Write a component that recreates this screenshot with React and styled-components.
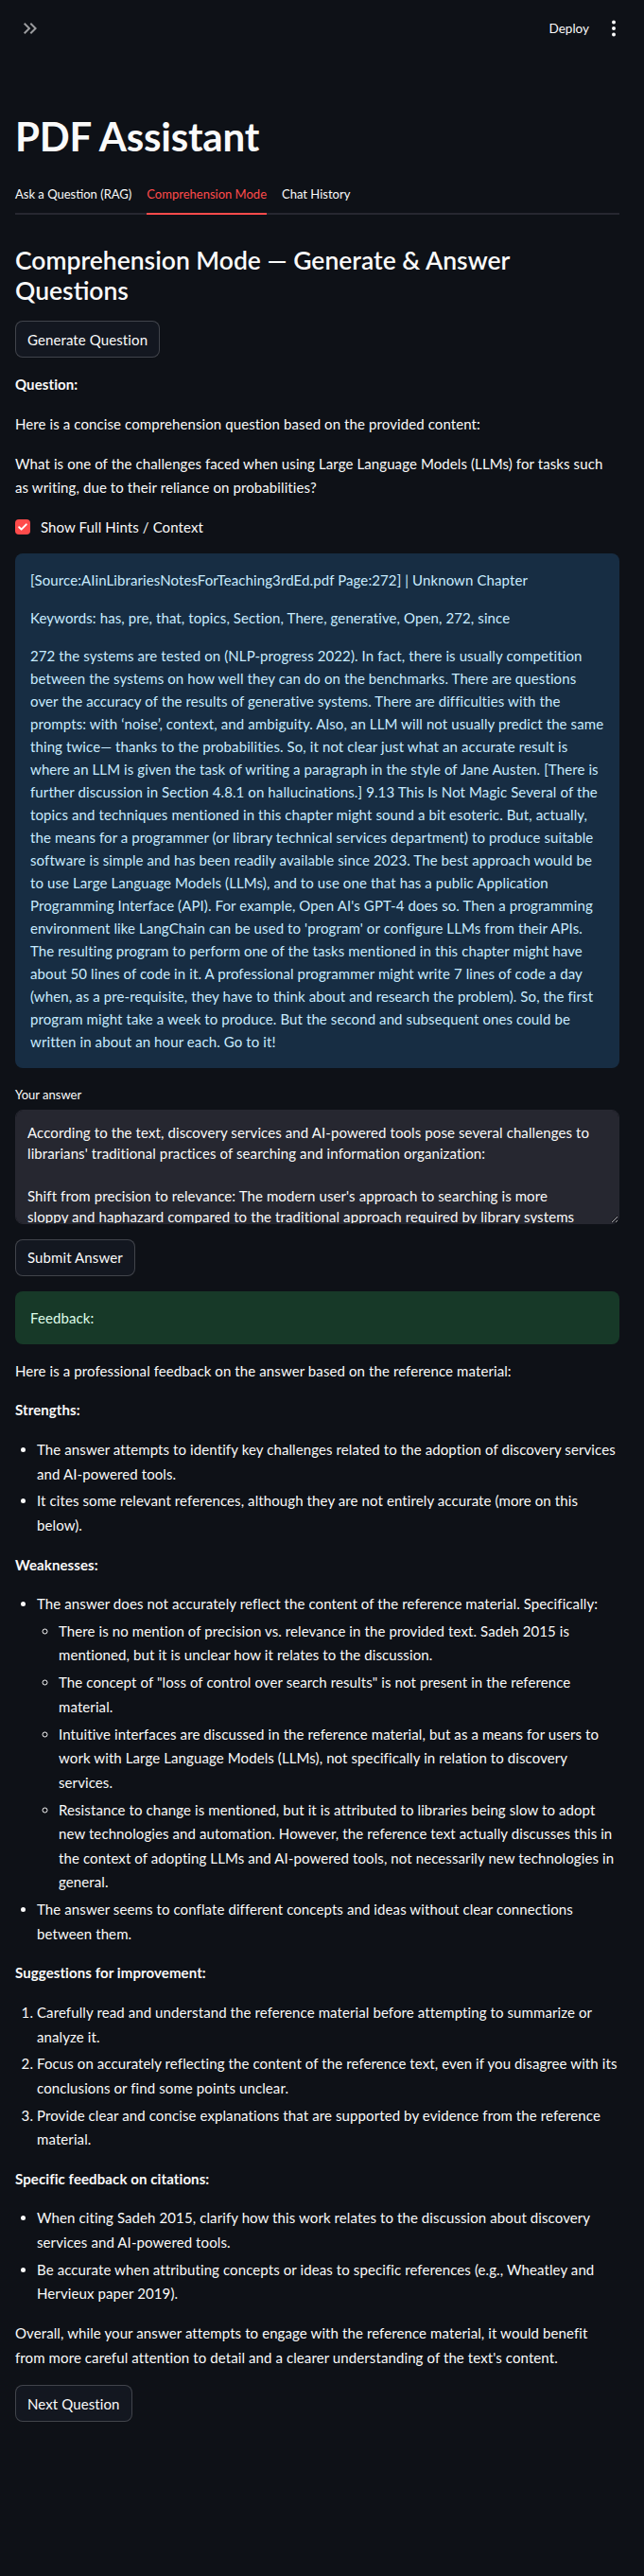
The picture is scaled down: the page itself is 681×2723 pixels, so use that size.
import styled, { createGlobalStyle } from 'styled-components'

const GlobalStyle = createGlobalStyle`
  html, body {
    margin: 0;
    padding: 0;
    background: #0e1117;
  }
  body {
    font-family: "Source Sans Pro", Lato, "Noto Sans", sans-serif;
    color: #fafafa;
    font-size: 15px;
    letter-spacing: 0.1px;
  }
  * {
    box-sizing: border-box;
  }
`

function DoubleArrowIcon() {
  return (
    <svg width="24" height="24" viewBox="0 0 24 24" fill="rgba(250,250,250,0.6)">
      <path d="M6.41 6L5 7.41 9.58 12 5 16.59 6.41 18l6-6z" />
      <path d="M13 6l-1.41 1.41L16.17 12l-4.58 4.59L13 18l6-6z" />
    </svg>
  )
}

function KebabIcon() {
  return (
    <svg width="24" height="24" viewBox="0 0 24 24" fill="#fafafa">
      <circle cx="12" cy="5.5" r="2" />
      <circle cx="12" cy="12" r="2" />
      <circle cx="12" cy="18.5" r="2" />
    </svg>
  )
}

function CheckIcon() {
  return (
    <svg width="12" height="12" viewBox="0 0 12 12">
      <path d="M2.2 6.2l2.4 2.4 5.2-5.2" fill="none" stroke="#fff" strokeWidth="2" strokeLinecap="round" strokeLinejoin="round" />
    </svg>
  )
}

const answerText = `According to the text, discovery services and AI-powered tools pose several challenges to librarians' traditional practices of searching and information organization:

Shift from precision to relevance: The modern user's approach to searching is more sloppy and haphazard compared to the traditional approach required by library systems (Sadeh 2015). Discovery services prioritize relevance over precision.`

function App() {
  return (
    <>
      <GlobalStyle />
      <Header>
        <IconButton><DoubleArrowIcon /></IconButton>
        <HeaderRight>
          <DeployButton>Deploy</DeployButton>
          <IconButton><KebabIcon /></IconButton>
        </HeaderRight>
      </Header>

      <Main>
        <Title>PDF Assistant</Title>

        <TabList>
          <Tab>Ask a Question (RAG)</Tab>
          <Tab active>Comprehension Mode</Tab>
          <Tab>Chat History</Tab>
        </TabList>

        <SubTitle>Comprehension Mode — Generate &amp; Answer Questions</SubTitle>

        <div>
          <Button>Generate Question</Button>
        </div>

        <Markdown>
          <p><strong>Question:</strong></p>
          <p>Here is a concise comprehension question based on the provided content:</p>
          <p>What is one of the challenges faced when using Large Language Models (LLMs) for tasks such as writing, due to their reliance on probabilities?</p>
        </Markdown>

        <CheckRow>
          <CheckBox><CheckIcon /></CheckBox>
          <span>Show Full Hints / Context</span>
        </CheckRow>

        <Alert kind="info">
          <p>[Source:AIinLibrariesNotesForTeaching3rdEd.pdf Page:272] | Unknown Chapter</p>
          <p>Keywords: has, pre, that, topics, Section, There, generative, Open, 272, since</p>
          <p>272 the systems are tested on (NLP-progress 2022). In fact, there is usually competition between the systems on how well they can do on the benchmarks. There are questions over the accuracy of the results of generative systems. There are difficulties with the prompts: with ‘noise’, context, and ambiguity. Also, an LLM will not usually predict the same thing twice— thanks to the probabilities. So, it not clear just what an accurate result is where an LLM is given the task of writing a paragraph in the style of Jane Austen. [There is further discussion in Section 4.8.1 on hallucinations.] 9.13 This Is Not Magic Several of the topics and techniques mentioned in this chapter might sound a bit esoteric. But, actually, the means for a programmer (or library technical services department) to produce suitable software is simple and has been readily available since 2023. The best approach would be to use Large Language Models (LLMs), and to use one that has a public Application Programming Interface (API). For example, Open AI's GPT-4 does so. Then a programming environment like LangChain can be used to 'program' or configure LLMs from their APIs. The resulting program to perform one of the tasks mentioned in this chapter might have about 50 lines of code in it. A professional programmer might write 7 lines of code a day (when, as a pre-requisite, they have to think about and research the problem). So, the first program might take a week to produce. But the second and subsequent ones could be written in about an hour each. Go to it!</p>
        </Alert>

        <Field>
          <FieldLabel>Your answer</FieldLabel>
          <TextArea defaultValue={answerText} />
        </Field>

        <div>
          <Button>Submit Answer</Button>
        </div>

        <Alert kind="success">
          <p>Feedback:</p>
        </Alert>

        <Markdown>
          <p>Here is a professional feedback on the answer based on the reference material:</p>
          <p><strong>Strengths:</strong></p>
          <ul>
            <li>The answer attempts to identify key challenges related to the adoption of discovery services and AI-powered tools.</li>
            <li>It cites some relevant references, although they are not entirely accurate (more on this below).</li>
          </ul>
          <p><strong>Weaknesses:</strong></p>
          <ul>
            <li>
              The answer does not accurately reflect the content of the reference material. Specifically:
              <ul>
                <li>There is no mention of precision vs. relevance in the provided text. Sadeh 2015 is mentioned, but it is unclear how it relates to the discussion.</li>
                <li>The concept of "loss of control over search results" is not present in the reference material.</li>
                <li>Intuitive interfaces are discussed in the reference material, but as a means for users to work with Large Language Models (LLMs), not specifically in relation to discovery services.</li>
                <li>Resistance to change is mentioned, but it is attributed to libraries being slow to adopt new technologies and automation. However, the reference text actually discusses this in the context of adopting LLMs and AI-powered tools, not necessarily new technologies in general.</li>
              </ul>
            </li>
            <li>The answer seems to conflate different concepts and ideas without clear connections between them.</li>
          </ul>
          <p><strong>Suggestions for improvement:</strong></p>
          <ol>
            <li>Carefully read and understand the reference material before attempting to summarize or analyze it.</li>
            <li>Focus on accurately reflecting the content of the reference text, even if you disagree with its conclusions or find some points unclear.</li>
            <li>Provide clear and concise explanations that are supported by evidence from the reference material.</li>
          </ol>
          <p><strong>Specific feedback on citations:</strong></p>
          <ul>
            <li>When citing Sadeh 2015, clarify how this work relates to the discussion about discovery services and AI-powered tools.</li>
            <li>Be accurate when attributing concepts or ideas to specific references (e.g., Wheatley and Hervieux paper 2019).</li>
          </ul>
          <p>Overall, while your answer attempts to engage with the reference material, it would benefit from more careful attention to detail and a clearer understanding of the text's content.</p>
        </Markdown>

        <div>
          <Button>Next Question</Button>
        </div>
      </Main>
    </>
  )
}

const Header = styled.header`
  height: 60px;
  display: flex;
  align-items: center;
  justify-content: space-between;
  padding: 0 20px 0 20px;
`

const HeaderRight = styled.div`
  display: flex;
  align-items: center;
  gap: 14px;
`

const IconButton = styled.div`
  width: 24px;
  height: 24px;
  display: flex;
  align-items: center;
  justify-content: center;
`

const DeployButton = styled.div`
  font-size: 13.5px;
  letter-spacing: 0;
  color: #fafafa;
`

const Main = styled.main`
  display: flex;
  flex-direction: column;
  gap: 16px;
  padding: 59px 26px 160px 16px;
`

const Title = styled.h1`
  margin: 0;
  font-size: 42px;
  font-weight: 700;
  line-height: 1.2;
  letter-spacing: -0.2px;
`

const TabList = styled.div`
  display: flex;
  gap: 16px;
  height: 40px;
  border-bottom: 2px solid #262730;
  margin-top: 2px;
`

const Tab = styled.div`
  display: flex;
  align-items: center;
  padding-bottom: 2px;
  margin-bottom: -2px;
  font-size: 13px;
  letter-spacing: 0;
  color: ${p => (p.active ? '#ff4b4b' : '#fafafa')};
  border-bottom: 2px solid ${p => (p.active ? '#ff4b4b' : 'transparent')};
`

const SubTitle = styled.h2`
  margin: 16px 0 0;
  font-size: 26.5px;
  font-weight: 600;
  line-height: 32px;
  letter-spacing: 0;
`

const Button = styled.button`
  font-family: inherit;
  font-size: 15px;
  letter-spacing: 0.1px;
  color: #fafafa;
  background: rgb(19, 23, 32);
  border: 1px solid rgba(250, 250, 250, 0.2);
  border-radius: 8px;
  height: 39px;
  padding: 0 12px;
`

const Markdown = styled.div`
  line-height: 25.6px;

  p {
    margin: 0 0 16px;
  }
  p:last-child {
    margin-bottom: 0;
  }
  strong {
    font-weight: 700;
  }
  ul, ol {
    margin: 0 0 16px;
    padding-left: 23px;
  }
  li {
    margin: 3.2px 0;
    padding-left: 0;
  }
  li ul {
    margin: 0;
    padding-left: 23px;
    list-style: circle;
  }
`

const CheckRow = styled.label`
  display: flex;
  align-items: center;
  gap: 11px;
  height: 24px;
`

const CheckBox = styled.span`
  width: 16px;
  height: 16px;
  border-radius: 4px;
  background: #ff4b4b;
  display: flex;
  align-items: center;
  justify-content: center;
`

const alertColors = {
  info: { bg: '#172d43', fg: '#c7ebff' },
  success: { bg: '#173928', fg: '#dffde9' },
}

const Alert = styled.div`
  background: ${p => alertColors[p.kind].bg};
  color: ${p => alertColors[p.kind].fg};
  border-radius: 8px;
  padding: 16px;
  line-height: 24px;

  p {
    margin: 0 0 16px;
  }
  p:last-child {
    margin-bottom: 0;
  }
`

const Field = styled.div`
  display: flex;
  flex-direction: column;
  gap: 4px;
`

const FieldLabel = styled.label`
  font-size: 13px;
  letter-spacing: 0;
  height: 24px;
  display: flex;
  align-items: center;
`

const TextArea = styled.textarea`
  height: 121px;
  width: 100%;
  resize: vertical;
  background: #262730;
  color: #fafafa;
  border: 1px solid #262730;
  border-radius: 8px;
  padding: 12px 28px 12px 12px;
  font-family: inherit;
  font-size: 15px;
  letter-spacing: 0.1px;
  line-height: 22.4px;
  scrollbar-width: none;
  outline: none;
`

export default App
